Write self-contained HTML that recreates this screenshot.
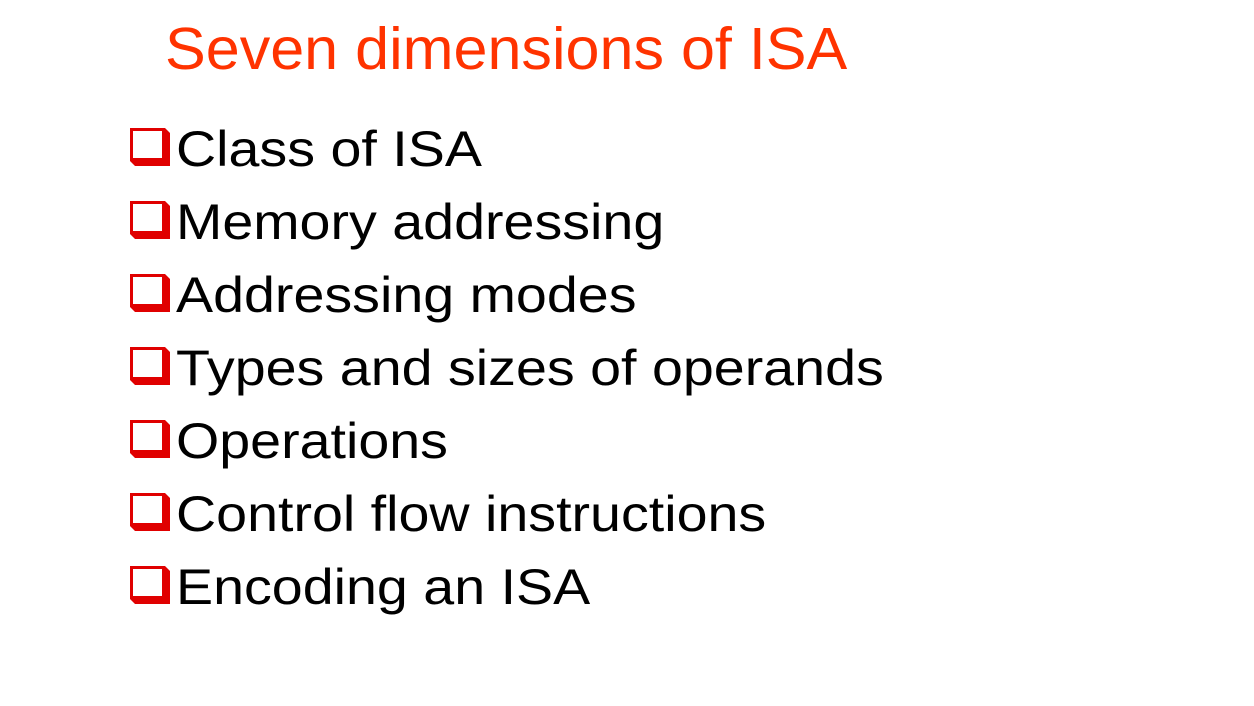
<!DOCTYPE html>
<html><head><style>
body{margin:0;width:1254px;height:706px;background:#fff;position:relative;overflow:hidden;font-family:"Liberation Sans",Arial,sans-serif}
.t{position:absolute;left:165px;top:14px;font-size:59px;color:#ff3300;line-height:70px;white-space:nowrap;transform:scaleX(1.035);transform-origin:0 0}
.i{position:absolute;left:176px;font-size:50px;line-height:60px;color:#000;white-space:nowrap;transform:scaleX(1.112);transform-origin:0 0}
.b{position:absolute;left:130px;width:40px;height:38px}
</style></head><body>
<div class="t">Seven dimensions of ISA</div>
<svg width="0" height="0" style="position:absolute"><defs><g id="bx"><path d="M0 0H35L40 5V38H5L0 33Z" fill="#e00000"/><rect x="3" y="3" width="29" height="27" fill="#fff"/></g></defs></svg>
<svg class="b" style="top:128px"><use href="#bx"/></svg><div class="i" style="top:119px">Class of ISA</div>
<svg class="b" style="top:201px"><use href="#bx"/></svg><div class="i" style="top:192px">Memory addressing</div>
<svg class="b" style="top:274px"><use href="#bx"/></svg><div class="i" style="top:265px">Addressing modes</div>
<svg class="b" style="top:347px"><use href="#bx"/></svg><div class="i" style="top:338px">Types and sizes of operands</div>
<svg class="b" style="top:420px"><use href="#bx"/></svg><div class="i" style="top:411px">Operations</div>
<svg class="b" style="top:493px"><use href="#bx"/></svg><div class="i" style="top:484px">Control flow instructions</div>
<svg class="b" style="top:566px"><use href="#bx"/></svg><div class="i" style="top:557px">Encoding an ISA</div>
</body></html>
